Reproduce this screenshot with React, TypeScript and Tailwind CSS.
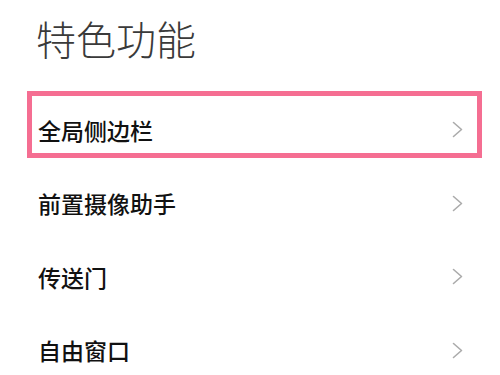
import * as React from "react"

const items = ["全局侧边栏", "前置摄像助手", "传送门", "自由窗口"]

function Chevron() {
  return (
    <svg width="11" height="17" viewBox="0 0 11 17" fill="none" className="shrink-0">
      <path d="M1.5 1.5 L9.5 8.5 L1.5 15.5" stroke="#ababab" strokeWidth="1.6" strokeLinecap="round" strokeLinejoin="round" />
    </svg>
  )
}

export default function App() {
  return (
    <div
      className="w-[500px] h-[375px] overflow-hidden bg-white"
      style={{ fontFamily: '"Noto Sans CJK SC", "Noto Sans", sans-serif' }}
    >
      {/* page title */}
      <h1 className="pl-[36px] pt-[18px] text-[40px] leading-[40px] font-light text-[#3a3a3a]">
        特色功能
      </h1>

      {/* settings list */}
      <ul className="mt-[35px]">
        {items.map((name, i) => (
          <li
            key={name}
            className="relative flex h-[73.5px] items-center justify-between pl-[38px] pr-[37px]"
          >
            <span className="text-[23px] font-medium text-[#111]">{name}</span>
            <Chevron />
            {i === 0 && (
              <span className="pointer-events-none absolute left-[27px] right-[18px] top-[-2px] bottom-[8.5px] border-[5px] border-[#f56e92]" />
            )}
          </li>
        ))}
      </ul>
    </div>
  )
}
